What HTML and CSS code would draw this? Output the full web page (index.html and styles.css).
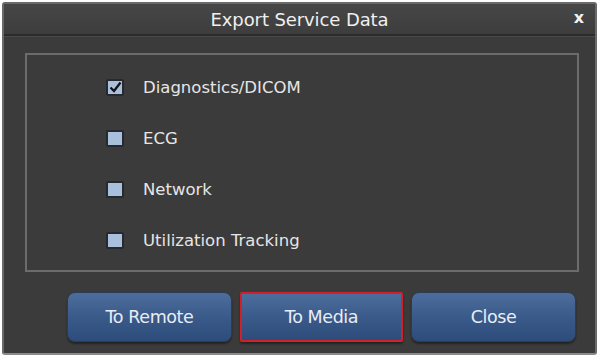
FILE: index.html
```html
<!DOCTYPE html>
<html lang="en">
<head>
    <meta charset="UTF-8">
    <title>Export Service Data</title>
    <link rel="stylesheet" href="styles.css">
</head>
<body>
    <div class="dialog">
        <div class="title-bar">
            <span class="title">Export Service Data</span>
            <span class="close-x">x</span>
        </div>
        <div class="content">
            <div class="panel">
                <label class="option">
                    <span class="box checked">
                        <svg width="13" height="12" viewBox="0 0 13 12"><path d="M1.5 6.5 L5 10 L11.5 1.5" fill="none" stroke="#111" stroke-width="2.2"/></svg>
                    </span>
                    <span class="option-text">Diagnostics/DICOM</span>
                </label>
                <label class="option">
                    <span class="box"></span>
                    <span class="option-text">ECG</span>
                </label>
                <label class="option">
                    <span class="box"></span>
                    <span class="option-text">Network</span>
                </label>
                <label class="option">
                    <span class="box"></span>
                    <span class="option-text">Utilization Tracking</span>
                </label>
            </div>
            <div class="buttons">
                <button class="btn">To Remote</button>
                <button class="btn focused">To Media</button>
                <button class="btn">Close</button>
            </div>
        </div>
    </div>
</body>
</html>
```

FILE: styles.css
```css
body {
    margin: 0;
    width: 600px;
    height: 358px;
    background-color: #ffffff;
    font-family: "DejaVu Sans", Tahoma, sans-serif;
}
.dialog {
    box-sizing: border-box;
    margin: 2px 0 0 2px;
    width: 595px;
    height: 353px;
    background-color: #3b3b3b;
    border: 2px solid #6a6a6a;
    border-bottom-color: #8a8a8a;
    border-radius: 3px;
    display: flex;
    flex-direction: column;
}
.title-bar {
    height: 30px;
    display: flex;
    align-items: center;
    justify-content: center;
    position: relative;
    background: linear-gradient(#474747, #3d3d3d);
    border-bottom: 2px solid #2b2b2b;
    box-shadow: 0 1px 0 #4a4a4a;
}
.title {
    color: #efefef;
    font-size: 18px;
    letter-spacing: -0.1px;
}
.close-x {
    position: absolute;
    right: 11px;
    top: 4px;
    color: #f2f2f2;
    font-size: 16px;
    font-weight: bold;
}
.content {
    flex: 1;
    padding: 17px 16px 0 21px;
    display: flex;
    flex-direction: column;
}
.panel {
    height: 219px;
    box-sizing: border-box;
    border: 2px solid #6c6c6c;
    padding: 22px 0 0 79px;
    display: flex;
    flex-direction: column;
    gap: 31px;
}
.option {
    display: flex;
    align-items: center;
    height: 20px;
}
.box {
    box-sizing: border-box;
    width: 18px;
    height: 17px;
    background-color: #a9c0dd;
    border: 2px solid #262a30;
    border-radius: 2px;
    display: flex;
    align-items: center;
    justify-content: center;
}
.option-text {
    margin-left: 19px;
    color: #e6e6e6;
    font-size: 16.5px;
    letter-spacing: 0;
}
.buttons {
    display: flex;
    gap: 8px;
    margin: 20px 0 0 42px;
}
.btn {
    width: 165px;
    height: 50px;
    border: 1px solid #2c3c52;
    border-radius: 8px;
    background: linear-gradient(#4d6d9c, #3a5a8a 50%, #2d4c7a);
    color: #e8edf5;
    font-family: "DejaVu Sans", Tahoma, sans-serif;
    font-size: 17.5px;
    letter-spacing: -0.4px;
    box-shadow: 0 2px 2px rgba(0, 0, 0, 0.4);
}
.btn.focused {
    border: 2px solid #d0202a;
    border-radius: 2px;
    width: 163px;
}
```
